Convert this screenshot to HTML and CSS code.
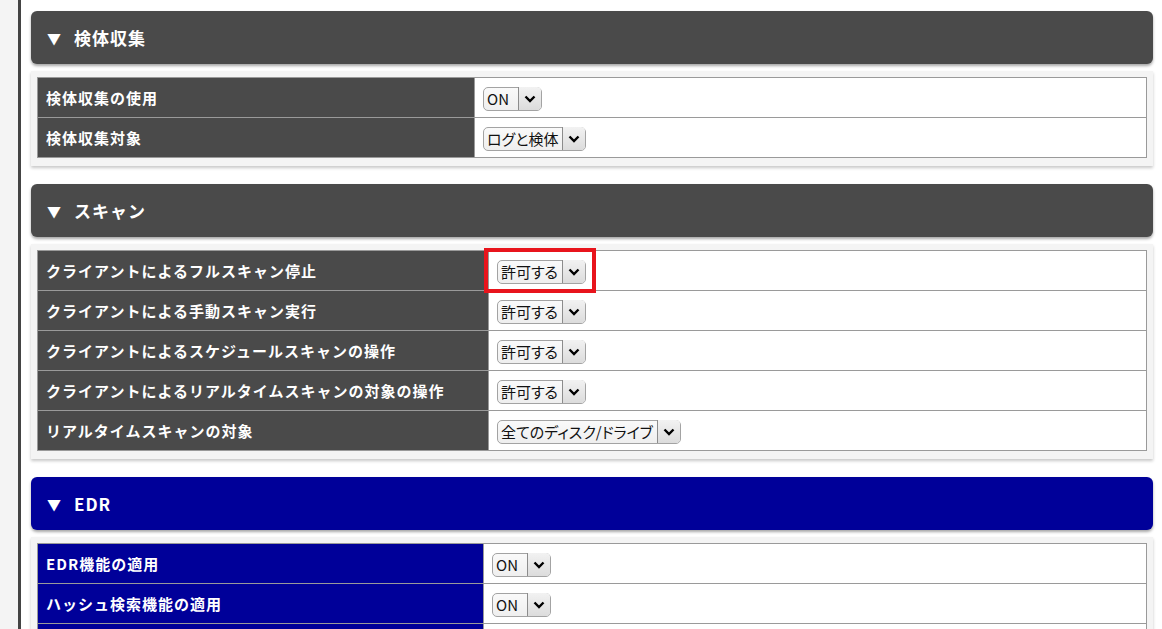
FILE: index.html
```html
<!doctype html>
<html lang="ja">
<head>
  <meta charset="utf-8" />
  <meta name="viewport" content="width=device-width,initial-scale=1" />
  <title>ポリシー設定</title>
  <link rel="stylesheet" href="styles.css">
</head>
<body>
  <div class="page">
    <aside class="rail"></aside>

    <main class="content">
      <!-- 検体収集 -->
      <section class="section">
        <h2 class="section-head"><span class="caret">▼</span>検体収集</h2>
        <div class="section-body">
          <table class="settings">
            <colgroup><col class="col-label col-label--s1"><col></colgroup>
            <tr>
              <th>検体収集の使用</th>
              <td>
                <span class="sel">
                  <select><option>ON</option><option>OFF</option></select>
                  <span class="sel-btn"><svg viewBox="0 0 12 8"><path d="M1.5 1.5 6 6l4.5-4.5"/></svg></span>
                </span>
              </td>
            </tr>
            <tr>
              <th>検体収集対象</th>
              <td>
                <span class="sel">
                  <select><option>ログと検体</option><option>ログのみ</option></select>
                  <span class="sel-btn"><svg viewBox="0 0 12 8"><path d="M1.5 1.5 6 6l4.5-4.5"/></svg></span>
                </span>
              </td>
            </tr>
          </table>
        </div>
      </section>

      <!-- スキャン -->
      <section class="section">
        <h2 class="section-head"><span class="caret">▼</span>スキャン</h2>
        <div class="section-body">
          <table class="settings">
            <colgroup><col class="col-label col-label--s2"><col></colgroup>
            <tr>
              <th>クライアントによるフルスキャン停止</th>
              <td>
                <span class="hl">
                  <span class="sel">
                    <select><option>許可する</option><option>禁止する</option></select>
                    <span class="sel-btn"><svg viewBox="0 0 12 8"><path d="M1.5 1.5 6 6l4.5-4.5"/></svg></span>
                  </span>
                </span>
              </td>
            </tr>
            <tr>
              <th>クライアントによる手動スキャン実行</th>
              <td>
                <span class="sel">
                  <select><option>許可する</option><option>禁止する</option></select>
                  <span class="sel-btn"><svg viewBox="0 0 12 8"><path d="M1.5 1.5 6 6l4.5-4.5"/></svg></span>
                </span>
              </td>
            </tr>
            <tr>
              <th>クライアントによるスケジュールスキャンの操作</th>
              <td>
                <span class="sel">
                  <select><option>許可する</option><option>禁止する</option></select>
                  <span class="sel-btn"><svg viewBox="0 0 12 8"><path d="M1.5 1.5 6 6l4.5-4.5"/></svg></span>
                </span>
              </td>
            </tr>
            <tr>
              <th>クライアントによるリアルタイムスキャンの対象の操作</th>
              <td>
                <span class="sel">
                  <select><option>許可する</option><option>禁止する</option></select>
                  <span class="sel-btn"><svg viewBox="0 0 12 8"><path d="M1.5 1.5 6 6l4.5-4.5"/></svg></span>
                </span>
              </td>
            </tr>
            <tr>
              <th>リアルタイムスキャンの対象</th>
              <td>
                <span class="sel">
                  <select><option>全てのディスク/ドライブ</option><option>ローカルディスク</option></select>
                  <span class="sel-btn"><svg viewBox="0 0 12 8"><path d="M1.5 1.5 6 6l4.5-4.5"/></svg></span>
                </span>
              </td>
            </tr>
          </table>
        </div>
      </section>

      <!-- EDR -->
      <section class="section section--edr">
        <h2 class="section-head"><span class="caret">▼</span>EDR</h2>
        <div class="section-body">
          <table class="settings">
            <colgroup><col class="col-label col-label--s3"><col></colgroup>
            <tr>
              <th>EDR機能の適用</th>
              <td>
                <span class="sel">
                  <select><option>ON</option><option>OFF</option></select>
                  <span class="sel-btn"><svg viewBox="0 0 12 8"><path d="M1.5 1.5 6 6l4.5-4.5"/></svg></span>
                </span>
              </td>
            </tr>
            <tr>
              <th>ハッシュ検索機能の適用</th>
              <td>
                <span class="sel">
                  <select><option>ON</option><option>OFF</option></select>
                  <span class="sel-btn"><svg viewBox="0 0 12 8"><path d="M1.5 1.5 6 6l4.5-4.5"/></svg></span>
                </span>
              </td>
            </tr>
            <!-- next row continues below the fold -->
            <tr class="row-more"><th></th><td></td></tr>
          </table>
        </div>
      </section>
    </main>
  </div>
</body>
</html>
```

FILE: styles.css
```css
:root{
  --rail:#f4f4f4;
  --rail-line:#444;
  --head:#4a4a4a;
  --edr:#000099;
  --panel:#f4f4f4;
  --grid:#9a9a9a;
  --mark:#e8141c;
}
html,body{margin:0;height:100%;}
body{
  background:#fff;color:#111;
  font-family:"Noto Sans CJK JP","Noto Sans",sans-serif;
  overflow:hidden;
}
.page{display:flex;min-height:100%;}
.rail{width:18px;flex:none;background:var(--rail);border-right:3px solid var(--rail-line);}
.content{flex:1;padding:11px 9px 0 10px;}

/* section header + panel */
.section{margin-bottom:18px;}
.section-head{
  margin:0;height:53px;display:flex;align-items:center;
  padding-left:16px;border-radius:6px;
  background:var(--head);color:#fff;
  font-size:17px;font-weight:700;letter-spacing:1px;
  box-shadow:0 2px 3px rgba(0,0,0,0.35);
}
.caret{font-size:14px;margin-right:13px;letter-spacing:0;}
.section-body{
  margin-top:7px;padding:6px 6px 8px;
  background:var(--panel);
  box-shadow:0 2px 3px rgba(0,0,0,0.22);
}
.section--edr .section-head{background:var(--edr);}

/* settings table */
.settings{width:100%;border-collapse:collapse;border:1px solid var(--grid);background:#fff;}
.settings th,.settings td{height:39px;padding:0 8px;border:1px solid var(--grid);}
.settings th{
  text-align:left;background:var(--head);color:#fff;
  font-size:15px;font-weight:700;letter-spacing:1px;
  padding-left:8px;
}
.section--edr .settings th{background:var(--edr);}
.col-label--s1{width:437px;}
.col-label--s2{width:451px;}
.col-label--s3{width:446px;}

/* select box look */
.sel{position:relative;display:inline-block;vertical-align:middle;}
.sel select{
  -webkit-appearance:none;appearance:none;
  height:24px;padding:0 26px 0 3px;margin:0;
  border:1px solid #a3a3a3;border-radius:5px;
  background:linear-gradient(#fafafa,#efefef);
  font-family:"Noto Sans CJK JP","Liberation Sans",sans-serif;
  font-feature-settings:"palt";
  font-size:15px;color:#111;line-height:22px;
}
.sel-btn{
  position:absolute;top:1px;right:1px;bottom:1px;width:22px;
  display:flex;align-items:center;justify-content:center;
  border-left:1px solid #8c8c8c;border-radius:0 4px 4px 0;
  background:linear-gradient(#f2f2f2,#dcdcdc);
  pointer-events:none;
}
.sel-btn svg{width:12px;height:8px;fill:none;stroke:#000;stroke-width:2.4;}

/* red highlight around a control */
.hl{position:relative;display:inline-block;}
.hl::after{
  content:"";position:absolute;
  top:-9px;bottom:-9px;left:-13px;right:-10px;
  border:4px solid var(--mark);
  pointer-events:none;
}
```
